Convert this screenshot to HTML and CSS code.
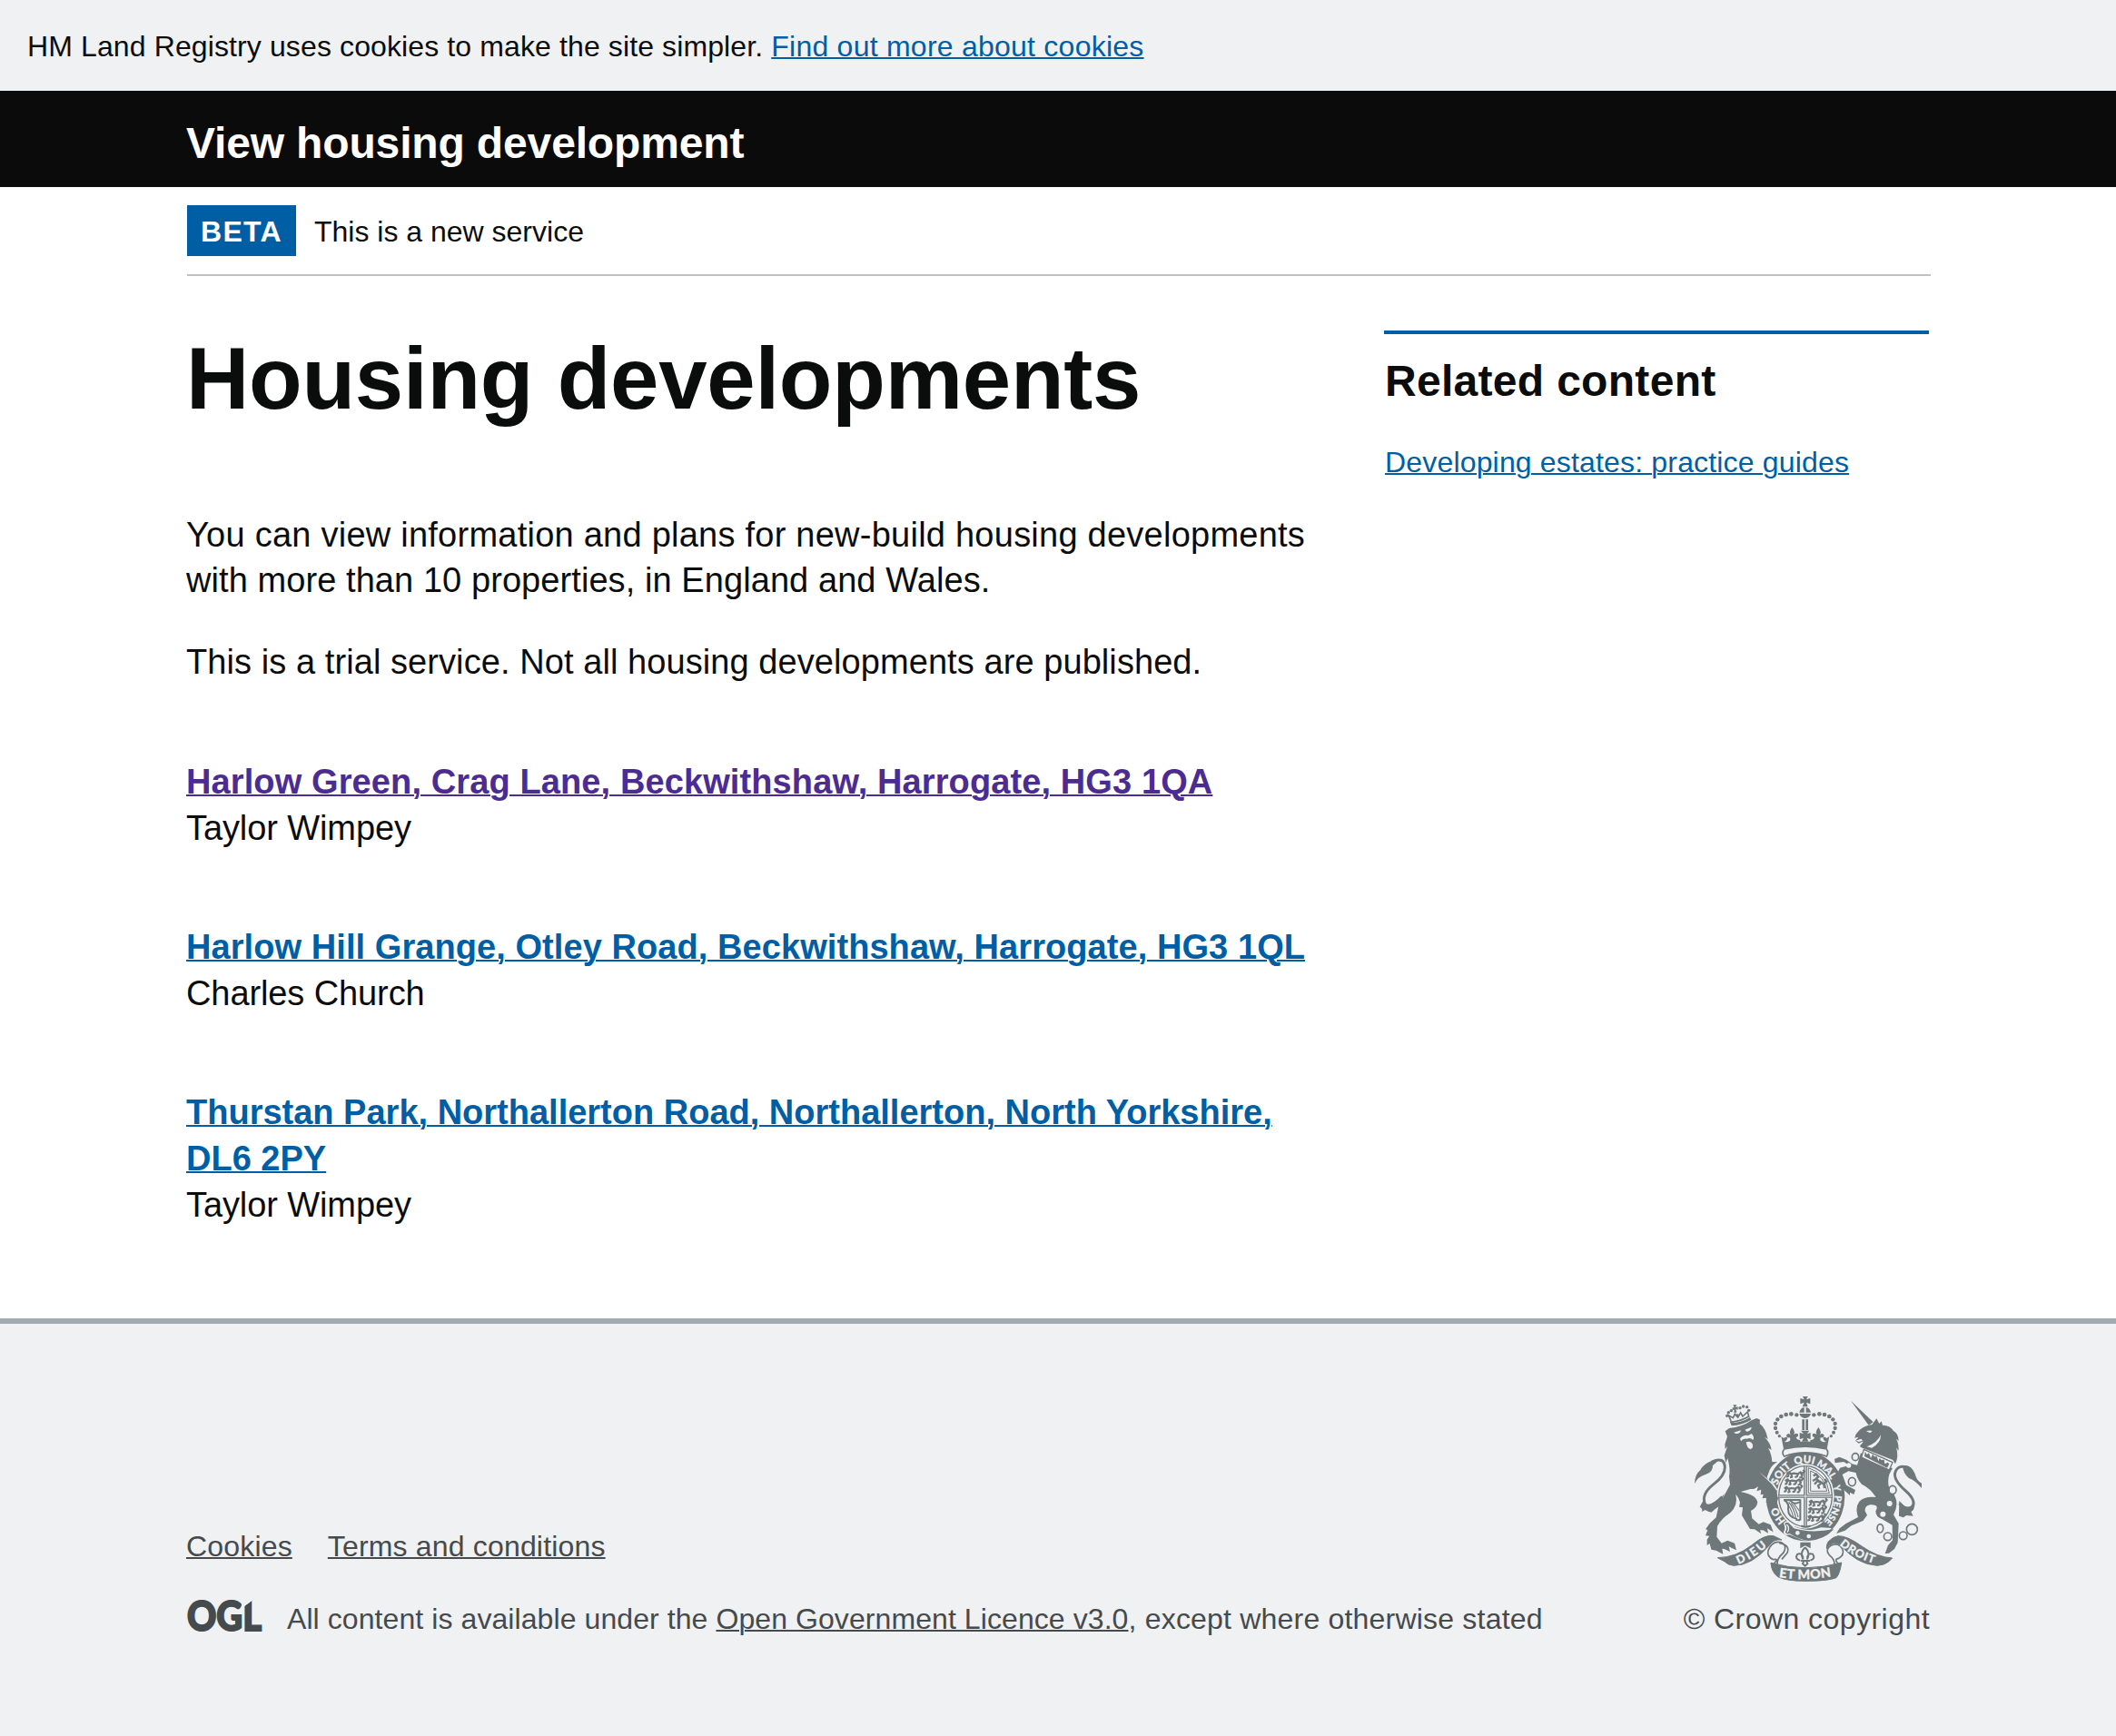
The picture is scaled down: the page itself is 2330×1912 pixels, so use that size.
FILE: index.html
```html
<!DOCTYPE html>
<html lang="en">
<head>
<meta charset="utf-8">
<title>Housing developments</title>
<link rel="stylesheet" href="styles.css">
</head>
<body>
<div class="cookie-banner">HM Land Registry uses cookies to make the site simpler. <a class="link" href="#">Find out more about cookies</a></div>
<header class="header"><div class="container"><a class="header-title" href="#">View housing development</a></div></header>
<div class="container">
  <div class="phase-banner"><strong class="phase-tag">BETA</strong><span>This is a new service</span></div>
  <main class="columns">
    <div class="content">
      <h1 class="title">Housing developments</h1>
      <p class="lede"><span class="lede-wide">You can view information and plans for new-build housing developments</span> with more than 10 properties, in England and Wales.</p>
      <p class="lede">This is a trial service. Not all housing developments are published.</p>
      <ul class="developments">
        <li><a class="link development visited" href="#">Harlow Green, Crag Lane, Beckwithshaw, Harrogate, HG3 1QA</a><br>Taylor Wimpey</li>
        <li><a class="link development development-mid" href="#">Harlow Hill Grange, Otley Road, Beckwithshaw, Harrogate, HG3 1QL</a><br>Charles Church</li>
        <li><a class="link development development-long" href="#">Thurstan Park, Northallerton Road, Northallerton, North Yorkshire, DL6 2PY</a><br>Taylor Wimpey</li>
      </ul>
    </div>
    <aside class="related">
      <h2>Related content</h2>
      <a class="link" href="#">Developing estates: practice guides</a>
    </aside>
  </main>
</div>
<footer class="footer">
  <div class="container footer-inner">
    <div>
      <ul class="footer-links"><li><a href="#">Cookies</a></li><li><a href="#">Terms and conditions</a></li></ul>
      <div class="licence">
        <svg class="ogl" viewBox="0 0 83 35" width="83" height="35" role="img" aria-label="Open Government Licence">
          <clipPath id="l-cut"><path d="M-4 -4 H60 V7 H62 L73 -1 V25 H85 V38 H-4 Z"/></clipPath>
          <text x="0" y="32.500" textLength="82" lengthAdjust="spacingAndGlyphs" fill="#454a4c" stroke="#454a4c" stroke-width="2" clip-path="url(#l-cut)">OGL</text>
        </svg>
        <span>All content is available under the <a href="#">Open Government Licence v3.0</a><span class="licence-end">, except where otherwise stated</span></span>
      </div>
    </div>
    <div class="copyright">
      <svg class="crest" viewBox="48 36 750 615" width="250" height="205" role="img" aria-label="Royal coat of arms">
        <defs>
          <path id="garter-text" d="M414 479 A97 110 0 0 1 414 259 A97 110 0 0 1 414 479"/>
          <path id="dieu-text" d="M193 594 Q246 573 294 528"/>
          <path id="mon-text" d="M326 636 Q414 650 506 633"/>
          <path id="droit-text" d="M526 529 Q572 571 643 592"/>
          <g id="guardant" fill="none" stroke-width="6.500" stroke-linejoin="round">
            <path d="M2 8 L10 3 L16 9 L26 7 L38 9 L48 3 L55 8 M10 4 L7 17 L1 19 M17 10 L20 19 L13 21 M40 9 L36 18 L29 20 M48 7 L54 13 L50 20 L44 21 M55 8 L61 1 L56 -4"/>
          </g>
        </defs>

        <!-- crown -->
        <g fill="#6e7779">
          <path d="M405 39 H422 L417 49 L430 45 V64 L417 59 L422 73 H404 L410 59 L397 64 V45 L410 49 Z"/>
          <path d="M394 92 Q397 77 410 75 V92 Z M432 92 Q429 77 416 75 V92 Z M394 96 H432 Q428 110 413 111 Q398 110 394 96 Z"/>
          <path d="M403 115 H411 V150 H403 Z M415 115 H423 V150 H415 Z"/>
          <path d="M399 152 H427 L419 163 L431 159 V181 L419 176 L424 188 H402 L408 176 L395 181 V159 L408 163 Z"/>
          <path id="half-crown" d="M370 141 Q382 157 375 166 Q381 158 389 163 Q393 172 383 174 Q385 182 397 184 V188 H414 V204 Q375 204 342 212 L334 171 L342 177 Q352 169 355 177 Q351 188 344 189 Q354 191 363 185 Q365 181 363 175 Q352 177 351 167 Q358 157 366 167 Q358 156 370 141 Z"/>
          <use href="#half-crown" transform="matrix(-1 0 0 1 827 0)"/>
          <g id="pearls"><circle cx="385" cy="100" r="6.500"/><circle cx="367" cy="97" r="7"/><circle cx="350" cy="99" r="7"/><circle cx="334" cy="105" r="7"/><circle cx="322" cy="115" r="6.500"/><circle cx="315" cy="129" r="6.500"/><circle cx="315" cy="144" r="6.500"/><circle cx="320" cy="158" r="6"/><circle cx="328" cy="170" r="5"/></g>
          <use href="#pearls" transform="matrix(-1 0 0 1 827 0)"/>
        </g>

        <!-- garter and shield -->
        <ellipse cx="414" cy="369" rx="130" ry="148" fill="#6e7779"/>
        <path d="M344 213 Q414 196 484 213 Q492 224 484 237 Q414 212 344 237 Q334 226 344 213 Z" fill="#f0f1f3" stroke="#6e7779" stroke-width="5"/>
        <ellipse cx="414" cy="369" rx="95" ry="107" fill="#f0f1f3"/>
        <ellipse cx="414" cy="369" rx="88" ry="100" fill="#f0f1f3" stroke="#6e7779" stroke-width="4"/>
        <g stroke="#6e7779" fill="none">
          <path d="M326 369 H502 M414 269 V469" stroke-width="11"/>
          <path d="M326 369 H502 M414 269 V469" stroke-width="3" stroke="#f0f1f3"/>
          <use href="#guardant" x="350" y="286"/><use href="#guardant" x="345" y="310"/><use href="#guardant" x="342" y="335"/>
          <use href="#guardant" x="424" y="380"/><use href="#guardant" x="422" y="404"/><use href="#guardant" x="420" y="430"/>
          <path d="M424 359 V275 Q484 294 493 359 Z M431 352 V285 Q477 302 485 352 Z" stroke-width="3"/>
          <path d="M440 301 L450 296 L456 305 L449 311 L460 319 L475 329 L477 342 M450 311 L438 318 M455 317 L444 329 M466 325 L456 334 L460 344 M474 330 L484 320 L478 312 M447 308 L460 322" stroke-width="7"/>
          <path d="M342 381 H395 M343 381 Q361 390 357 412 Q357 439 387 444 M397 379 V446 Q391 450 382 446 M349 384 Q359 376 370 388 Q379 397 396 387" stroke-width="6"/>
          <path d="M352 390 Q368 410 374 438 M359 388 Q377 409 382 440 M367 391 Q384 409 390 438 M376 393 L394 417" stroke-width="3.500"/>
          <path d="M400 466 Q414 475 431 466" stroke-width="6"/>
        </g>
        <g class="motto" font-size="34">
          <text text-anchor="middle"><textPath href="#garter-text" startOffset="15.500%">HO</textPath></text>
          <text text-anchor="middle"><textPath href="#garter-text" startOffset="36.500%">SOIT</textPath></text>
          <text text-anchor="middle"><textPath href="#garter-text" startOffset="49.500%">QUI</textPath></text>
          <text text-anchor="middle" font-size="32"><textPath href="#garter-text" startOffset="61%">MAL</textPath></text>
          <text text-anchor="middle" font-size="30"><textPath href="#garter-text" startOffset="71.200%">Y</textPath></text>
          <text text-anchor="middle" font-size="31"><textPath href="#garter-text" startOffset="82%">PENSE</textPath></text>
        </g>
        <path d="M342 458 Q350 445 365 455 L380 470 Q420 484 444 478 L466 472 L500 474 L480 502 Q440 522 404 514 L362 496 Q341 500 342 486 Q350 474 342 458 Z" fill="#f0f1f3"/>
        <path d="M346 459 Q354 450 363 461 L376 475 Q430 492 508 478 Q475 514 424 516 Q392 512 362 492 Q350 496 347 487 Q357 476 346 459 Z" fill="#6e7779"/>
        <g fill="#f0f1f3"><circle cx="388" cy="490" r="7"/><circle cx="425" cy="501" r="7"/></g>
        <path d="M352 462 Q364 474 354 488" fill="none" stroke="#f0f1f3" stroke-width="4"/>

        <!-- lion -->
        <g fill="#6e7779">
          <path d="M149 154 L162 144 Q205 140 236 118 L253 111 L264 116 L263 129 Q283 144 290 180 L279 173 Q299 193 302 216 L291 209 Q302 228 304 255 L322 256 Q304 264 296 282 L287 307 L318 355 L324 376 L318 397 L309 386 L303 399 L296 384 L284 391 L285 374 L272 376 L275 362 L266 364 L268 347 L253 352 L258 337 L244 345 L232 345 L200 354 Q252 364 256 389 Q253 407 234 417 L238 442 L260 461 L275 454 L299 463 L308 487 L297 481 L288 475 L291 491 L274 481 L264 481 L268 493 L246 478 L231 477 L204 432 L207 406 L195 404 L198 389 Q193 372 184 362 Q192 400 166 423 Q135 444 123 468 L121 503 L137 524 L157 515 L180 524 L186 547 L171 540 L161 535 L165 552 L146 543 L139 542 L142 560 L119 548 L103 545 L98 525 L89 531 L89 512 L97 500 L84 499 L91 480 L84 478 L98 458 L119 439 L127 401 L165 331 L162 303 Q167 280 157 243 L151 258 L146 235 L151 219 L157 203 L149 213 L148 197 L156 172 Z"/>
          <path d="M48 327 Q48 298 67 282 Q76 263 109 250 Q133 243 119 258 L108 267 Q109 290 84 297 Q60 303 48 327 Z"/>
          <path d="M104 256 Q147 236 148 274 Q148 301 111 329 Q68 362 83 396 Q101 410 139 371" fill="none" stroke="#6e7779" stroke-width="9"/>
          <path d="M76 384 Q82 404 101 402 Q124 394 146 360 L134 398 Q112 413 103 422 Q93 421 83 414 L72 420 Q76 409 65 404 Z"/>
          <path d="M166 126 Q204 126 231 108 L235 116 Q205 134 170 136 Z"/>
          <path d="M168 120 L160 101 L175 110 L181 97 L191 108 L200 93 L207 105 L223 90 L227 105 Q203 120 168 124 Z" fill="none" stroke="#6e7779" stroke-width="5"/>
          <g><circle cx="155" cy="103" r="5"/><circle cx="160" cy="92" r="5"/><circle cx="169" cy="86" r="5"/><circle cx="198" cy="77" r="5"/><circle cx="209" cy="72" r="5"/><circle cx="221" cy="74" r="5"/><circle cx="227" cy="85" r="5"/><circle cx="189" cy="102" r="5"/></g>
          <path d="M175 67 H187 L183 75 L191 73 V83 L184 81 L187 92 H178 L179 83 L173 84 V76 L179 76 Z"/>
        </g>
        <g fill="#f0f1f3">
          <path d="M177 158 L201 151 Q198 164 184 162 Z M214 149 L236 140 Q235 153 220 155 Z M198 178 Q210 164 225 168 L236 162 Q247 173 241 183 Q232 173 221 179 Q209 176 201 187 Z M218 190 Q233 184 239 196 Q244 211 232 213 Q221 211 218 190 Z"/>
          <path d="M261 288 L312 331 L324 350 L318 349 L304 330 Z"/>
        </g>
        <path d="M324 259 Q299 277 289 306" fill="none" stroke="#f0f1f3" stroke-width="3"/>

        <!-- unicorn -->
        <g fill="#6e7779">
          <path d="M564 53 L638 124 L623 134 Z"/>
          <path d="M649 112 L658 129 L665 121 L669 134 Q693 134 705 153 Q721 161 722 186 L714 179 Q724 198 721 219 L714 208 Q723 238 711 262 L703 249 L604 210 Q587 205 600 196 L606 187 L590 194 L579 185 L590 173 L577 176 Q578 164 588 155 Q603 137 634 132 Z"/>
          <path d="M597 226 L702 277 Q683 301 689 335 L708 365 Q724 396 705 430 L722 459 L719 522 L708 543 L690 557 L677 558 L687 531 L702 514 L701 464 L668 445 Q646 438 646 418 Q660 396 628 397 Q609 401 611 418 L618 431 L604 450 L566 466 L545 482 L516 492 L527 475 L548 459 L588 438 Q577 406 592 386 Q610 368 647 372 Q628 342 600 329 Q579 306 580 276 L557 266 L541 255 L512 259 L510 246 L526 239 L549 248 L568 262 L585 266 Z"/>
          <path d="M528 275 L561 266 L592 279 L584 292 L556 286 L536 297 L549 332 L579 348 L574 363 L561 356 L561 366 L541 347 L528 320 L521 290 Z"/>
          <path d="M735 268 Q763 263 776 295 Q782 319 798 326 V342 Q776 316 756 309 Q737 295 735 268 Z M724 384 L745 405 Q766 410 775 393 Q775 414 763 420 L770 434 L748 432 L737 439 L723 434 Z"/>
        </g>
        <path d="M760 278 Q719 259 710 292 Q705 315 744 350 Q785 387 764 405 Q747 415 724 393" fill="none" stroke="#6e7779" stroke-width="9"/>
        <path d="M615 154 Q625 149 635 153 L628 160 Z M617 205 Q651 193 663 166 Q664 193 633 209 Z M580 185 L598 179 L603 185 L591 189 Z" fill="#f0f1f3"/>
        <path d="M607 214 L702 257 L691 282 L599 240 Z" fill="#f0f1f3" stroke="#6e7779" stroke-width="4"/>
        <path d="M609 237 L611 221 L617 231 L624 226 L630 243 L636 230 L642 238 L650 237 L655 253 L659 243 L665 249 L674 248 L676 262 L686 257 L691 262 L684 275 Z" fill="#6e7779"/>
        <g fill="#f0f1f3" stroke="#6e7779" stroke-width="5">
          <ellipse cx="579" cy="239" rx="11" ry="12"/><ellipse cx="568" cy="321" rx="12" ry="14"/><ellipse cx="702" cy="348" rx="12" ry="14"/>
          <ellipse cx="661" cy="475" rx="10" ry="14"/><circle cx="686" cy="502" r="13"/><circle cx="737" cy="499" r="13"/><circle cx="766" cy="478" r="18"/>
        </g>
        <g fill="#f0f1f3"><circle cx="557" cy="267" r="8"/><circle cx="692" cy="393" r="9"/><circle cx="670" cy="428" r="9"/></g>

        <!-- fleur-de-lis -->
        <path d="M397 521 H431 V541 L413 532 L397 541 Z" fill="#6e7779"/>
        <path d="M413 538 Q431 555 420 577 Q420 554 438 560 Q449 575 430 581 M413 538 Q395 555 406 577 Q406 554 388 560 Q377 575 396 581 M398 582 H429 M409 582 L405 592 L413 599 L421 592 L417 582" fill="none" stroke="#6e7779" stroke-width="6"/>

        <!-- ribbon -->
        <g fill="#6e7779" stroke="#6e7779" stroke-width="3">
          <path d="M124 572 Q185 571 236 531 Q281 493 309 500 L336 513 Q309 509 295 531 Q237 598 177 598 Q158 596 148 585 Z"/>
          <path d="M701 573 Q653 571 600 534 Q552 499 522 500 Q507 502 490 518 Q482 531 484 542 Q503 515 527 527 Q583 594 651 598 Q676 596 690 584 Z"/>
          <path d="M300 589 Q414 622 533 588 Q528 625 516 638 Q490 649 414 649 Q350 649 323 635 Q302 620 300 589 Z"/>
        </g>
        <path d="M300 590 Q309 600 316 584 Q326 575 308 578 Q286 569 291 548 Q304 516 331 521 Q356 529 342 555 Q318 575 321 596 M327 523 Q365 530 354 556 L336 577 M533 589 Q526 603 519 588 Q510 576 522 575 Q544 564 537 544 Q525 519 498 532 Q478 545 492 562 Q513 579 510 597" fill="none" stroke="#6e7779" stroke-width="5"/>
        <g class="motto" font-size="38">
          <text><textPath href="#dieu-text" textLength="112">DIEU</textPath></text>
          <text font-size="43"><textPath href="#mon-text" textLength="174">ET MON</textPath></text>
          <text><textPath href="#droit-text" textLength="130">DROIT</textPath></text>
        </g>
      </svg>
      <span>© Crown copyright</span>
    </div>
  </div>
</footer>
</body>
</html>
```

FILE: styles.css
```css
* { box-sizing: border-box; }
body { margin: 0; font-family: "Liberation Sans", Arial, sans-serif; font-size: 32px; line-height: 40px; color: #0b0c0c; background: #fff; }
h1, h2, p, ul { margin: 0; padding: 0; }
ul { list-style: none; }
.container { width: 1920px; margin: 0 auto; }
.cookie-banner { height: 100px; padding: 31px 30px 0; background: #f0f1f3; letter-spacing: .116px; }
.cookie-banner .link { letter-spacing: .24px; }
.link { color: #005ea5; text-decoration-thickness: 2px; }
.visited { color: #4c2c92; }
.header { height: 106px; padding-top: 28px; background: #0b0b0b; }
.header-title { font-size: 48px; font-weight: 700; line-height: 60px; letter-spacing: -.15px; color: #fff; text-decoration: none; }
.phase-banner { display: flex; gap: 20px; margin-left: 1px; width: 1920px; padding: 20px 0; border-bottom: 2px solid #bfc1c3; line-height: 54px; }
.phase-banner > * { padding-top: 2px; }
.phase-banner .phase-tag { padding: 2px 15px 0; background: #005ea5; color: #fff; letter-spacing: 1.3px; }
.columns { display: grid; grid-template-columns: 1259px 600px; gap: 60px; padding-top: 60px; align-items: start; }
.title { padding-top: 3px; font-size: 96px; line-height: 100px; letter-spacing: -.25px; margin-bottom: 97px; }
.lede { font-size: 38px; line-height: 50px; letter-spacing: .075px; margin-bottom: 40px; }
.lede-wide { letter-spacing: .243px; }
.developments { margin-top: 82px; font-size: 38px; line-height: 50px; letter-spacing: -.1px; display: grid; gap: 81px; }
.development { font-weight: 700; line-height: 51px; letter-spacing: .11px; }
.development-mid { letter-spacing: .07px; }
.development-long { letter-spacing: 0; }
.related { border-top: 4px solid #005ea5; padding: 22px 0 0 1px; }
.related h2 { font-size: 48px; line-height: 60px; letter-spacing: .3px; margin-bottom: 39px; }
.related .link { letter-spacing: .17px; }
.footer { background: #f0f1f3; border-top: 6px solid #a1acb2; margin-top: 100px; padding-top: 79px; color: #454a4c; height: 460px; }
.footer a { color: inherit; text-decoration-thickness: 2px; }
.footer-inner { display: flex; justify-content: space-between; align-items: flex-end; }
.footer-links { display: flex; gap: 39px; margin-bottom: 40px; letter-spacing: .17px; }
.licence { display: flex; gap: 27px; padding-left: 1px; letter-spacing: .08px; }
.licence-end { letter-spacing: .2px; }
.ogl { overflow: visible; font: 900 45px/1 Lato, sans-serif; letter-spacing: 0; }
.copyright { display: flex; flex-direction: column; align-items: flex-end; gap: 21px; letter-spacing: .45px; }
.crest { margin-right: 9px; letter-spacing: 0; }
.motto { fill: #f0f1f3; stroke: #f0f1f3; stroke-width: .8px; font-family: Lato, sans-serif; font-weight: 900; }
```
